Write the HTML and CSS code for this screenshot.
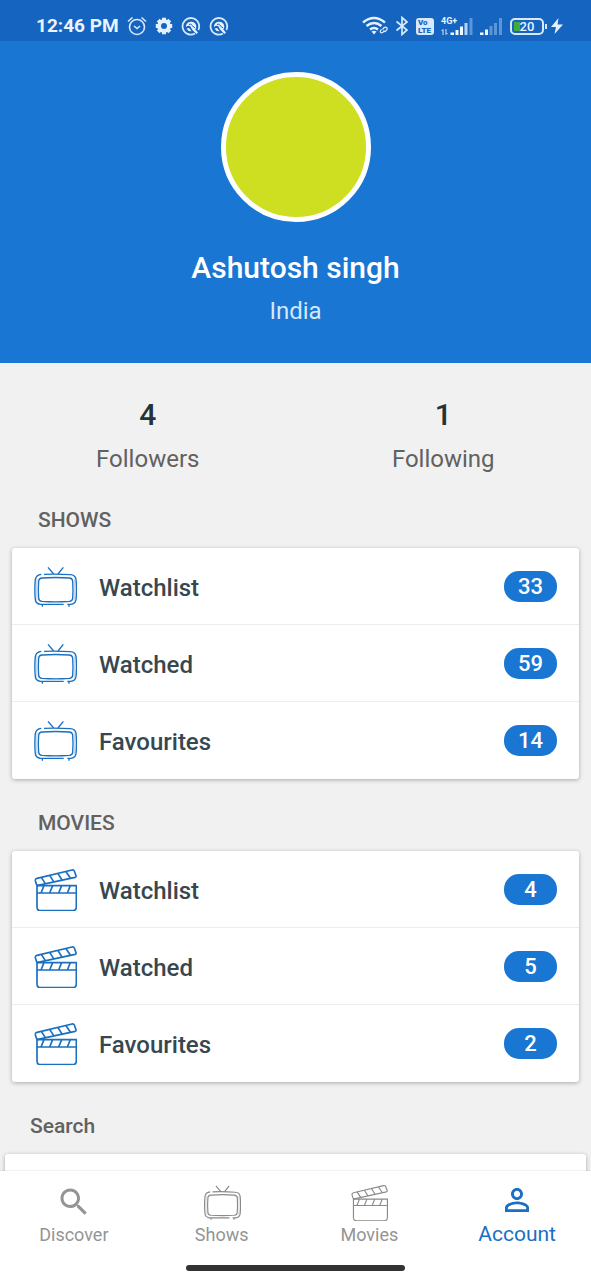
FILE: index.html
```html
<!DOCTYPE html>
<html lang="en">
<head>
<meta charset="utf-8">
<meta name="viewport" content="width=device-width, initial-scale=1">
<title>Account</title>
<link rel="stylesheet" href="styles.css">
</head>
<body class="app">
<svg class="sprite" aria-hidden="true">
  <symbol id="tv" viewBox="0 0 132 132">
    <path d="M45 10 62 30M91 10 75 30M28 121v7M108 121v7"/>
    <path d="M33 31Q68 29 112 32Q127 33 129 46Q132 77 129 107Q127 120 113 121H103M92 121H22Q8 119 7 107Q4 76 7 46Q9 33 25 31"/>
    <path d="M27 42Q68 39 109 42Q118 43 119 51Q121 77 119 103Q118 111 109 112Q68 115 27 112Q18 111 17 103Q15 77 17 51Q18 43 27 42Z"/>
    <path class="faint" d="M12 44Q9 77 12 110M124 44Q127 77 124 110"/>
  </symbol>
  <symbol id="clapper" viewBox="0 0 132 132">
    <path d="M12 34 117 9Q122 8 124 12L129 26Q130 30 126 31L15 55Q11 55 10 51L7 41Q6 36 12 34Z"/>
    <path d="M25 31 37 50M50 25 62 44M75 20 87 39M99 14 112 33"/>
    <path d="M12 56H130V120Q130 131 119 131H23Q12 131 12 120ZM12 78H130M33 56 24 78M59 56 50 78M86 56 77 78M112 56 103 78"/>
  </symbol>
  <symbol id="swirl" viewBox="0 0 20 20">
    <path d="M14 17.500A8.300 8.300 0 1 1 17.300 14" fill="none" stroke="#d9e9fb" stroke-width="1.800"/>
    <path d="M5 9.500A5.300 5.300 0 0 1 15.300 10Q15.300 12 14.300 13.500L17 16.500 15.500 18 11 13.500 9.500 10.500Q7.500 9 5 11Z" fill="#e6f1fd"/>
    <path d="M5.500 12.500Q7 15.500 10.500 15.300L8 12Z" fill="#e6f1fd"/>
    <path d="M8 8.500Q10 7 11 9.500L14 12" fill="none" stroke="#1565c0" stroke-width="1"/>
  </symbol>
</svg>

<header class="status">
  <div class="status-left">
    <time class="clock">12:46 PM</time>
    <svg width="20" height="20" viewBox="0 0 20 20" fill="none" stroke="#d9e9fb" stroke-width="1.600"><circle cx="10" cy="11" r="7.500"/><path d="M1 5.500 5.500 1.500M19 5.500 14.500 1.500M7 10 10 12.500 13 10"/></svg>
    <svg width="18" height="18" viewBox="0 0 18 18"><g fill="#e6f1fd"><circle cx="9" cy="9" r="6.800"/><path d="M7 .8h4v16.400H7zM.8 7h16.400v4H.8z"/><path d="M7 .8h4v16.400H7zM.8 7h16.400v4H.8z" transform="rotate(45 9 9)"/></g><circle cx="9" cy="9" r="3" fill="#1565c0"/></svg>
    <svg width="20" height="20"><use href="#swirl"/></svg>
    <svg width="20" height="20"><use href="#swirl"/></svg>
  </div>
  <div class="status-right">
    <svg width="26" height="20" viewBox="0 0 26 20" fill="none" stroke="#e6f1fd"><path d="M1 6.500Q12 -2.500 23 6.500M4.500 10Q12 4 19.500 10M8 13.500Q12 10.500 16 13.500" stroke-width="2.400"/><path d="M9.500 15.500 12 18.500 14.500 15.500Q12 13.800 9.500 15.500Z" fill="#e6f1fd" stroke="none"/><path d="M20.500 13.500 22 11.800Q23.500 10.500 25 12 25.500 13.500 24 14.800L22.500 16M22.500 14.500 21 16.200Q19 17.500 18.300 16 18 14.500 19.800 13.500" stroke-width="1.200"/></svg>
    <svg width="14" height="20" viewBox="0 0 14 20" fill="none" stroke="#d9e9fb" stroke-width="1.700"><path d="M1.500 5.500 12 14 7 18.500V1.500L12 6 1.500 14.500"/></svg>
    <span class="volte"><span>Vo</span><span>LTE</span></span>
    <span class="cell">
      <span class="cell-type">4G+</span>
      <svg width="32" height="19" viewBox="0 0 32 19"><path d="M2 18v-5.500L.5 14M5 12v5.500L6.500 16" fill="none" stroke="#d9e9fb"/><path d="M9.500 15.500h3.500V18H9.500zM14.500 13h3v5h-3zM19 9.500h3V18h-3z" fill="#eef6ff"/><path d="M23.500 6h3v12h-3z" fill="#b5d2f2"/><path d="M28.500 1h3v17h-3z" fill="#5c96d9"/></svg>
    </span>
    <svg width="23" height="19" viewBox="0 0 23 19"><path d="M0 15.500h3.500V18H0zM5 12.500h3V18H5z" fill="#eef6ff"/><path d="M9.500 9h3v9h-3zM14 6h3v12h-3zM19 1h3v17h-3z" fill="#5c96d9"/></svg>
    <span class="battery"><span class="battery-fill"></span><span class="battery-value">20</span></span>
    <svg width="12" height="16" viewBox="0 0 12 16"><path d="M7.500 0 0 9h5L3.500 16 12 6.500H6.500Z" fill="#e6f1fd"/></svg>
  </div>
</header>

<main class="content">
  <section class="profile">
    <div class="avatar" role="img" aria-label="Profile picture"></div>
    <h1 class="name">Ashutosh singh</h1>
    <p class="country">India</p>
  </section>

  <section class="stats">
    <a class="stat" href="#followers"><strong class="stat-value">4</strong><span>Followers</span></a>
    <a class="stat" href="#following"><strong class="stat-value">1</strong><span>Following</span></a>
  </section>

  <section class="group">
    <h2 class="group-title">SHOWS</h2>
    <ul class="card">
      <li class="item"><a class="row" href="#shows-watchlist"><svg class="row-icon row-icon-thin"><use href="#tv"/></svg><span class="row-label">Watchlist</span><span class="badge">33</span></a></li>
      <li class="item"><a class="row" href="#shows-watched"><svg class="row-icon row-icon-thin"><use href="#tv"/></svg><span class="row-label">Watched</span><span class="badge">59</span></a></li>
      <li class="item"><a class="row" href="#shows-favourites"><svg class="row-icon row-icon-thin"><use href="#tv"/></svg><span class="row-label">Favourites</span><span class="badge">14</span></a></li>
    </ul>
  </section>

  <section class="group">
    <h2 class="group-title">MOVIES</h2>
    <ul class="card">
      <li class="item"><a class="row" href="#movies-watchlist"><svg class="row-icon"><use href="#clapper"/></svg><span class="row-label">Watchlist</span><span class="badge">4</span></a></li>
      <li class="item"><a class="row" href="#movies-watched"><svg class="row-icon"><use href="#clapper"/></svg><span class="row-label">Watched</span><span class="badge">5</span></a></li>
      <li class="item"><a class="row" href="#movies-favourites"><svg class="row-icon"><use href="#clapper"/></svg><span class="row-label">Favourites</span><span class="badge">2</span></a></li>
    </ul>
  </section>

  <section class="group group-wide">
    <h2 class="group-title">Search</h2>
    <div class="card card-empty"></div>
  </section>
</main>

<footer class="bottom">
  <nav class="tabs">
    <a class="tab" href="#discover"><span class="tab-icon"><svg width="36" height="36" viewBox="0 0 24 24"><path fill="#949494" d="M15.500 14h-.790l-.280-.270C15.410 12.590 16 11.110 16 9.500 16 5.910 13.090 3 9.500 3S3 5.910 3 9.500 5.910 16 9.500 16c1.610 0 3.090-.590 4.230-1.570l.270.280v.790l5 4.990L20.490 19l-4.990-5zm-6 0C7.010 14 5 11.990 5 9.500S7.010 5 9.500 5 14 7.010 14 9.500 11.990 14 9.500 14z"/></svg></span>Discover</a>
    <a class="tab" href="#shows"><span class="tab-icon"><svg class="tab-line"><use href="#tv"/></svg></span>Shows</a>
    <a class="tab" href="#movies"><span class="tab-icon"><svg class="tab-line"><use href="#clapper"/></svg></span>Movies</a>
    <a class="tab tab-active" href="#account" aria-current="page"><span class="tab-icon"><svg width="36" height="36" viewBox="0 0 24 24"><path fill="#1a6fc4" d="M12 5.900c1.160 0 2.100.940 2.100 2.100s-.940 2.100-2.100 2.100S9.900 9.160 9.900 8s.940-2.100 2.100-2.100m0 9c2.970 0 6.100 1.460 6.100 2.100v1.100H5.900V17c0-.640 3.130-2.100 6.100-2.100M12 4C9.790 4 8 5.790 8 8s1.790 4 4 4 4-1.790 4-4-1.790-4-4-4zm0 9c-2.670 0-8 1.340-8 4v3h16v-3c0-2.660-5.330-4-8-4z"/></svg></span>Account</a>
  </nav>
  <div class="home-bar"></div>
</footer>
</body>
</html>
```
FILE: styles.css
```css
* { box-sizing: border-box; }

.app {
  margin: 0;
  height: 100vh;
  display: flex;
  flex-direction: column;
  overflow: hidden;
  background: #f1f1f1;
  color: #616161;
  font-family: Roboto, "Noto Sans", sans-serif;
}

.app a { color: inherit; text-decoration: none; }

.sprite { display: none; }

/* Status bar */
.status {
  flex: none;
  height: 41px;
  padding: 11px 28px 0 36px;
  display: flex;
  justify-content: space-between;
  background: #1565c0;
  color: #eaf4ff;
}

.status-left,
.status-right {
  display: flex;
  align-items: center;
  height: 30px;
}

.status-left { gap: 8px; }
.status-right { gap: 7px; }

.clock { font-size: 19px; font-weight: 700; line-height: 24px; }

.volte {
  display: flex;
  flex-direction: column;
  width: 18px;
  height: 17px;
  padding: 1px 2px 0;
  border-radius: 3px;
  background: #d9e9fb;
  color: #1565c0;
  font-size: 8px;
  font-weight: 900;
  line-height: 8px;
}

.cell { position: relative; display: flex; }
.cell-type {
  position: absolute;
  top: 0;
  left: 0;
  font-size: 9px;
  font-weight: 700;
  line-height: 8px;
}

.battery {
  position: relative;
  display: flex;
  align-items: center;
  justify-content: center;
  width: 34px;
  height: 17px;
  border: 2px solid #d9e9fb;
  border-radius: 5px;
}
.battery::after {
  content: "";
  position: absolute;
  right: -5px;
  top: 4px;
  width: 2px;
  height: 5px;
  background: #d9e9fb;
}
.battery-fill {
  position: absolute;
  left: 2px;
  top: 2px;
  bottom: 2px;
  width: 6px;
  background: #43a93b;
}
.battery-value {
  position: relative;
  font-size: 13px;
  font-weight: 500;
  line-height: 13px;
}

/* Scrolling content */
.content {
  flex: 1;
  min-height: 0;
  overflow: auto;
  scrollbar-width: none;
}

.profile {
  display: flex;
  flex-direction: column;
  align-items: center;
  padding: 31px 16px 36px;
  background: #1976d2;
  color: #fff;
}
.avatar {
  width: 150px;
  height: 150px;
  border: 5px solid #fff;
  border-radius: 50%;
  background: #cddf20;
}
.name {
  margin: 28px 0 10px;
  font-size: 30px;
  font-weight: 500;
  line-height: 36px;
}
.country {
  margin: 0;
  font-size: 24px;
  line-height: 31px;
  color: #d6e7f8;
}

.stats {
  display: grid;
  grid-template-columns: 1fr 1fr;
  padding: 34px 0 30px;
}
.stat {
  display: flex;
  flex-direction: column;
  align-items: center;
  gap: 10px;
  font-size: 24px;
  line-height: 32px;
}
.stat-value {
  font-size: 30px;
  font-weight: 500;
  line-height: 36px;
  color: #263238;
}

/* Grouped lists */
.group { padding: 0 12px 29px; }
.group-wide { padding: 0 5px; }
.group-title {
  margin: 0 0 14px;
  padding: 1px 26px 0;
  font-size: 21px;
  font-weight: 500;
  line-height: 28px;
}
.group-wide .group-title { padding-left: 25px; }
.card {
  margin: 0;
  padding: 0;
  list-style: none;
  border-radius: 3px;
  background: #fff;
  box-shadow: 0 1px 4px rgba(0, 0, 0, 0.3);
}
.card-empty { height: 77px; }

.item { height: 77px; border-bottom: 1px solid #ececec; }
.item:last-child { border-bottom-color: transparent; }
.row {
  display: flex;
  align-items: center;
  height: 100%;
  padding: 0 22px 0 21px;
}
.row-icon {
  width: 44px;
  height: 44px;
  margin-right: 22px;
  fill: none;
  stroke: #1a6fbf;
  stroke-width: 5px;
}
.row-icon-thin { stroke-width: 4px; }
.faint { opacity: 0.25; }
.row-label {
  flex: 1;
  padding-top: 3px;
  font-size: 24px;
  font-weight: 500;
  line-height: 30px;
  color: #37474f;
}
.badge {
  width: 53px;
  padding-top: 1px;
  border-radius: 15px;
  background: #1976d2;
  color: #fff;
  font-size: 22px;
  font-weight: 500;
  line-height: 30px;
  text-align: center;
}

/* Bottom navigation */
.bottom {
  position: relative;
  flex: none;
  padding-bottom: 9px;
  background: #fff;
  box-shadow: 0 -1px 1px rgba(0, 0, 0, 0.05);
}
.tabs {
  display: grid;
  grid-template-columns: repeat(4, 1fr);
  height: 94px;
}
.tab {
  display: flex;
  flex-direction: column;
  align-items: center;
  padding-top: 11px;
  font-size: 18px;
  line-height: 28px;
}
.app .tab { color: #949494; }
.app .tab-active {
  padding-top: 9px;
  font-size: 21px;
  line-height: 30px;
  color: #1a6fc4;
}
.tab-icon {
  display: flex;
  align-items: center;
  justify-content: center;
  height: 39px;
}
.tab-line {
  width: 38px;
  height: 38px;
  fill: none;
  stroke: #8a8a8a;
  stroke-width: 4px;
}
.home-bar {
  width: 37%;
  height: 6px;
  margin: 0 auto;
  border-radius: 3px;
  background: #333;
}
```
